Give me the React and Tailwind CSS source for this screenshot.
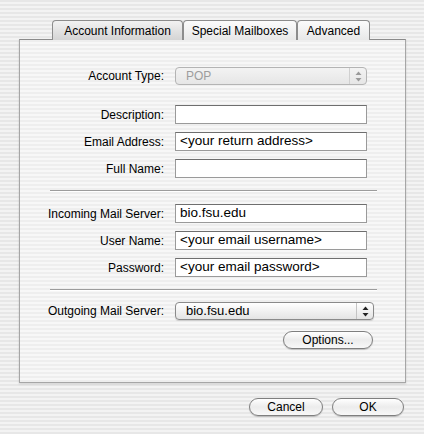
// Mail account preferences sheet - Aqua style

import React from "react";

const stripes =
  "bg-[repeating-linear-gradient(to_bottom,#e7e7e7_0px,#e7e7e7_2px,#f3f3f3_2px,#f3f3f3_4px)]";
const panelStripes =
  "bg-[repeating-linear-gradient(to_bottom,#eeeeee_0px,#eeeeee_2px,#f7f7f7_2px,#f7f7f7_4px)]";

const Tab = ({ label, selected, width }) => (
  <div
    className={`h-[20px] ${width} flex items-center justify-center rounded-t-[4px] border border-b-0 border-[#8c8c8c] text-[12px] text-black ${
      selected
        ? "bg-gradient-to-b from-[#f2f2f2] to-[#d4d4d4]"
        : "bg-gradient-to-b from-[#fbfbfb] to-[#e8e8e8]"
    }`}
  >
    {label}
  </div>
);

const Label = ({ children }) => (
  <div className="w-[145px] text-right text-[12px] text-black pr-[1px]">{children}</div>
);

const Field = ({ value }) => (
  <div className="w-[192px] h-[19px] bg-white border border-[#9a9a9a] border-t-[#6e6e6e] flex items-center pl-[4px] text-[13.5px] text-black whitespace-nowrap">
    {value}
  </div>
);

const Row = ({ label, children, className = "" }) => (
  <div className={`flex items-center gap-[10px] ${className}`}>
    <Label>{label}</Label>
    {children}
  </div>
);

const Arrows = ({ dim }) => (
  <svg width="7" height="11" viewBox="0 0 7 11" className="block">
    <path d="M3.5 0.5 L6.5 4 L0.5 4 Z" fill={dim ? "#9a9a9a" : "#222"} />
    <path d="M3.5 10.5 L6.5 7 L0.5 7 Z" fill={dim ? "#9a9a9a" : "#222"} />
  </svg>
);

const Popup = ({ value, width, dim }) => (
  <div
    className={`${width} h-[18px] rounded-[4px] border flex items-center ${
      dim
        ? "border-[#b4b4b4] bg-gradient-to-b from-[#f3f3f3] to-[#e6e6e6] text-[#9d9d9d] text-[12px]"
        : "border-[#8a8a8a] bg-gradient-to-b from-[#ffffff] to-[#e4e4e4] text-black text-[13px] shadow-[0_1px_1px_rgba(0,0,0,0.15)]"
    }`}
  >
    <div className="flex-1 pl-[10px] whitespace-nowrap">{value}</div>
    <div
      className={`h-full w-[17px] flex items-center justify-center border-l ${
        dim ? "border-[#d0d0d0]" : "border-[#c4c4c4]"
      }`}
    >
      <Arrows dim={dim} />
    </div>
  </div>
);

const Button = ({ label, width }) => (
  <div
    className={`${width} h-[18px] rounded-full border border-[#7f7f7f] bg-gradient-to-b from-[#ffffff] via-[#ececec] to-[#f8f8f8] shadow-[0_1px_1px_rgba(0,0,0,0.2)] flex items-center justify-center text-[12px] text-black`}
  >
    {label}
  </div>
);

const Separator = ({ className = "" }) => (
  <div className={`ml-[30px] w-[327px] h-px bg-[#9c9c9c] shadow-[0_1px_0_#ffffff] ${className}`} />
);

const App = () => {
  return (
    <div
      className={`w-[424px] h-[434px] ${stripes} pt-[20px] font-['Liberation_Sans',Arial,sans-serif]`}
    >
      {/* Tabs */}
      <div className="flex justify-center pr-[2px] relative z-10 -mb-px">
        <Tab label="Account Information" selected width="w-[131px]" />
        <Tab label="Special Mailboxes" width="w-[114px]" />
        <Tab label="Advanced" width="w-[73px]" />
      </div>

      {/* Panel */}
      <div
        className={`ml-[19px] w-[387px] h-[344px] ${panelStripes} border border-[#a6a6a6] border-t-[#8a8a8a] shadow-[0_1px_2px_rgba(0,0,0,0.15)] pt-[27px] flex flex-col`}
      >
        <Row label="Account Type:">
          <Popup value="POP" width="w-[192px]" dim />
        </Row>

        <Row label="Description:" className="mt-[20px]">
          <Field value="" />
        </Row>
        <Row label="Email Address:" className="mt-[8px]">
          <Field value="<your return address>" />
        </Row>
        <Row label="Full Name:" className="mt-[8px]">
          <Field value="" />
        </Row>

        <Separator className="mt-[12px]" />

        <Row label="Incoming Mail Server:" className="mt-[13px]">
          <Field value="bio.fsu.edu" />
        </Row>
        <Row label="User Name:" className="mt-[8px]">
          <Field value="<your email username>" />
        </Row>
        <Row label="Password:" className="mt-[8px]">
          <Field value="<your email password>" />
        </Row>

        <Separator className="mt-[12px]" />

        <Row label="Outgoing Mail Server:" className="mt-[12px]">
          <Popup value="bio.fsu.edu" width="w-[199px]" />
        </Row>

        <div className="mt-[11px] flex justify-end pr-[32px]">
          <Button label="Options..." width="w-[90px]" />
        </div>
      </div>

      {/* Dialog buttons */}
      <div className="mt-[15px] flex justify-end gap-[9px] pr-[20px]">
        <Button label="Cancel" width="w-[74px]" />
        <Button label="OK" width="w-[72px]" />
      </div>
    </div>
  );
};

export default App;
